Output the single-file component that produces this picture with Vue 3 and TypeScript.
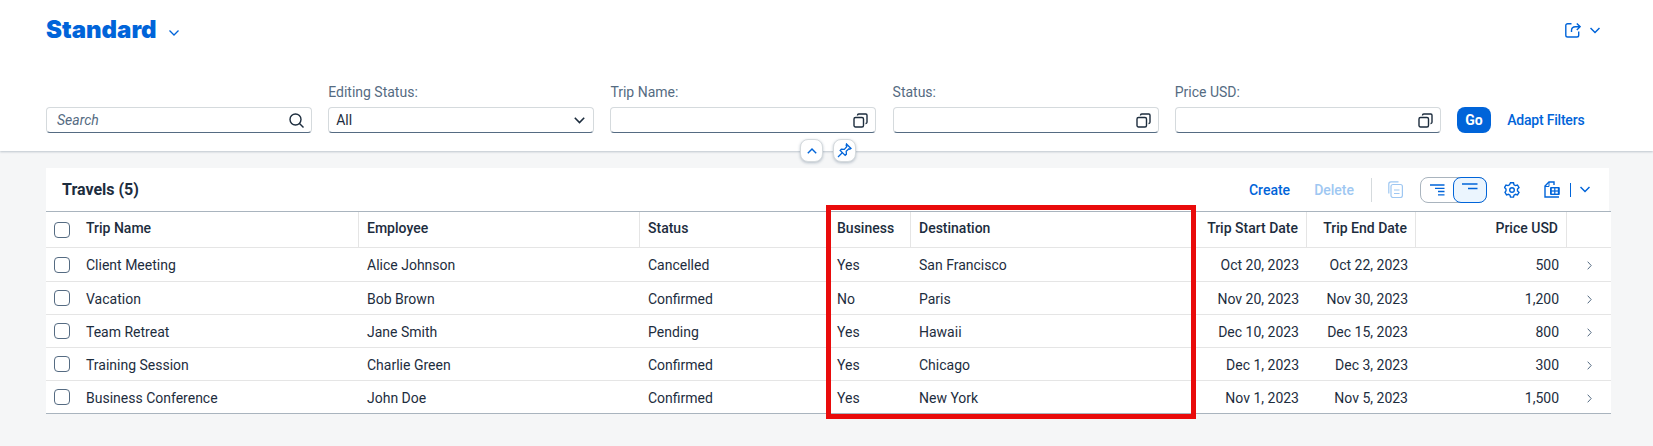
<script setup lang="ts">
interface Row { trip: string; emp: string; status: string; biz: string; dest: string; start: string; end: string; price: string }
const rows: Row[] = [
  { trip: 'Client Meeting', emp: 'Alice Johnson', status: 'Cancelled', biz: 'Yes', dest: 'San Francisco', start: 'Oct 20, 2023', end: 'Oct 22, 2023', price: '500' },
  { trip: 'Vacation', emp: 'Bob Brown', status: 'Confirmed', biz: 'No', dest: 'Paris', start: 'Nov 20, 2023', end: 'Nov 30, 2023', price: '1,200' },
  { trip: 'Team Retreat', emp: 'Jane Smith', status: 'Pending', biz: 'Yes', dest: 'Hawaii', start: 'Dec 10, 2023', end: 'Dec 15, 2023', price: '800' },
  { trip: 'Training Session', emp: 'Charlie Green', status: 'Confirmed', biz: 'Yes', dest: 'Chicago', start: 'Dec 1, 2023', end: 'Dec 3, 2023', price: '300' },
  { trip: 'Business Conference', emp: 'John Doe', status: 'Confirmed', biz: 'Yes', dest: 'New York', start: 'Nov 1, 2023', end: 'Nov 5, 2023', price: '1,500' },
]
const valueHelps = ['Trip Name:', 'Status:', 'Price USD:']
</script>

<template>
  <div class="page">
    <header class="head">
      <div class="title-row">
        <div class="variant">
          <h1>Standard</h1>
          <svg class="chev" width="10" height="6" viewBox="0 0 10 6"><path d="M.5.5 5 5 9.500.5" /></svg>
        </div>
        <div class="share">
          <svg width="16" height="16" viewBox="0 0 16 16" fill="none" stroke="#0064d9" stroke-width="1.400">
            <path d="M6.500 1.800H2.600a1.800 1.800 0 0 0-1.800 1.800v9.600a1.800 1.800 0 0 0 1.800 1.800h9.300a1.800 1.800 0 0 0 1.800-1.800V9.500" />
            <path d="M6.500 10V8.500c0-2.300 1.800-3.800 4-3.800h4.500M11.800 1.400l3.300 3.300-3.300 3.300" />
          </svg>
          <svg class="chev big" width="10" height="7" viewBox="0 0 10 7"><path d="M.5 1 5 5.500 9.500 1" /></svg>
        </div>
      </div>
      <div class="filters">
        <div class="field">
          <span class="label"></span>
          <div class="input"><i class="ph">Search</i>
            <svg width="15" height="15" viewBox="0 0 15 15" fill="none" stroke="#1d2d3e" stroke-width="1.400"><circle cx="6.500" cy="6.500" r="5.500" /><path d="m10.500 10.500 4 4" /></svg>
          </div>
        </div>
        <div class="field">
          <span class="label">Editing Status:</span>
          <div class="input select"><span>All</span>
            <svg width="11" height="7" viewBox="0 0 11 7" fill="none" stroke="#1d2d3e" stroke-width="1.600"><path d="m.8.800 4.700 4.700L10.200.8" /></svg>
          </div>
        </div>
        <div v-for="l in valueHelps" :key="l" class="field">
          <span class="label">{{ l }}</span>
          <div class="input">
            <span></span>
            <svg width="15" height="15" viewBox="0 0 15 15" fill="none" stroke="#1d2d3e" stroke-width="1.400"><rect x="1" y="4.500" width="9.500" height="9.500" rx="1.500" /><path d="M4.500 2.500V2.300A1.300 1.300 0 0 1 5.800 1h7a1.300 1.300 0 0 1 1.200 1.300v7a1.300 1.300 0 0 1-1.200 1.200h-.3" /></svg>
          </div>
        </div>
        <button class="go">Go</button>
        <a class="adapt">Adapt Filters</a>
      </div>
      <div class="collapse">
        <span class="round"><svg width="10" height="6" viewBox="0 0 10 6" fill="none" stroke="#0064d9" stroke-width="1.400"><path d="M.8 5.300 5 1l4.200 4.300" /></svg></span>
        <span class="round"><svg width="15" height="15" viewBox="0 0 15 15" fill="none" stroke="#0064d9" stroke-width="1.300"><path d="M9.500 1 14 5.500l-1.200.8-.9-.5-2.700 2.500.2 3-1.200 1.100L3.200 7.400l1.100-1.200 3 .2L9.800 3.700l-.6-1z" /><path d="M5.500 9.500 1 14" /></svg></span>
      </div>
    </header>

    <section class="card">
      <div class="toolbar">
        <h2>Travels (5)</h2>
        <div class="actions">
          <a class="act">Create</a>
          <a class="act off">Delete</a>
          <span class="sep"></span>
          <svg class="copy" width="15" height="17" viewBox="0 0 15 17" fill="none" stroke="#9ec7f2" stroke-width="1.200"><rect x="3" y="3.500" width="11.400" height="13" rx="2" /><path d="M.8 12.500V3A2.200 2.200 0 0 1 3 .8h7.500M6 9h5.500M6 12.500h5.500" /></svg>
          <div class="seg">
            <span class="seg-btn">
              <svg width="15" height="12" viewBox="0 0 15 12" stroke="#0064d9" stroke-width="1.300"><path d="M0 1h14.500M5 4.300h9.500M8 7.500h6.500M8 10.800h6.500" /></svg>
            </span>
            <span class="seg-btn on">
              <svg width="16" height="7" viewBox="0 0 16 7" stroke="#0064d9" stroke-width="1.300"><path d="M0 1h15.500M6 5.500h9.500" /></svg>
            </span>
          </div>
          <svg class="gear" width="16" height="16" viewBox="0 0 16 16" fill="none" stroke="#0064d9" stroke-width="1.400"><path d="M6.500.8h3l.5 2 1.500.8 2-.6 1.500 2.600-1.500 1.400v1.900l1.500 1.400-1.500 2.600-2-.6-1.500.8-.5 2h-3l-.5-2-1.500-.8-2 .6-1.500-2.600L2 8.900V7L.5 5.600 2 3l2 .6 1.500-.8z" /><circle cx="8" cy="8" r="2.300" /></svg>
          <svg class="sheet" width="16" height="17" viewBox="0 0 16 17" fill="none" stroke="#0064d9" stroke-width="1.400"><path d="M10 4V1H5L1 5v11h14" /><path d="M1 5.500h4V1" stroke-width="1" /><rect x="6" y="6" width="9.800" height="8" rx="1" fill="#0064d9" stroke="none" /><rect x="7.800" y="7.400" width="2.400" height="2" fill="#fff" stroke="none" /><rect x="11.400" y="7.400" width="2.400" height="2" fill="#fff" stroke="none" /><rect x="7.800" y="10.600" width="2.400" height="2" fill="#fff" stroke="none" /><rect x="11.400" y="10.600" width="2.400" height="2" fill="#fff" stroke="none" /></svg>
          <span class="thin"></span>
          <svg class="chev big" width="10" height="7" viewBox="0 0 10 7"><path d="M.5 1 5 5.500 9.500 1" /></svg>
        </div>
      </div>

      <div class="table-wrap">
        <table>
          <colgroup>
            <col class="c1" /><col class="c2" /><col class="c3" /><col class="c4" /><col class="c5" /><col class="c6" /><col class="c7" /><col class="c8" /><col class="c9" /><col class="c10" />
          </colgroup>
          <thead>
            <tr>
              <th class="sel"><span class="box"></span></th>
              <th>Trip Name</th><th>Employee</th><th>Status</th><th>Business</th><th>Destination</th>
              <th class="r">Trip Start Date</th><th class="r">Trip End Date</th><th class="r">Price USD</th><th></th>
            </tr>
          </thead>
          <tbody>
            <tr v-for="r in rows" :key="r.trip">
              <td class="sel"><span class="box"></span></td>
              <td>{{ r.trip }}</td><td>{{ r.emp }}</td><td>{{ r.status }}</td><td>{{ r.biz }}</td><td>{{ r.dest }}</td>
              <td class="r">{{ r.start }}</td><td class="r">{{ r.end }}</td><td class="r">{{ r.price }}</td>
              <td class="nav"><svg width="5" height="9" viewBox="0 0 5 9" fill="none" stroke="#556b82" stroke-width="1"><path d="m.7.700 3.500 3.800L.7 8.300" /></svg></td>
            </tr>
          </tbody>
        </table>
        <div class="mark"></div>
      </div>
    </section>
  </div>
</template>

<style>
html, body { margin: 0; background: #f5f6f7; }
</style>

<style scoped>
.page { width: 1653px; height: 446px; overflow: hidden; background: #f5f6f7; font-family: "Roboto", "Liberation Sans", sans-serif; font-size: 14px; color: #1d2d3e; }
.head { position: relative; height: 151px; box-sizing: border-box; background: #fff; padding: 0 53px 0 46px; box-shadow: 0 1px 2px rgba(85,107,130,.35); }
.title-row { height: 60px; display: flex; align-items: center; justify-content: space-between; }
.variant { display: flex; align-items: center; gap: 12px; }
h1 { margin: 0; font-family: "Inter", sans-serif; font-size: 24px; font-weight: 900; color: #0064d9; line-height: 1; }
.chev { fill: none; stroke: #0064d9; stroke-width: 1.300; }
.chev.big { stroke-width: 1.500; }
.variant .chev { margin-top: 5px; }
.share { display: flex; align-items: center; gap: 9px; }
.filters { display: flex; align-items: flex-end; gap: 16.200px; padding-top: 24px; }
.field { width: 266px; display: flex; flex-direction: column; gap: 6px; }
.label { height: 17px; line-height: 17px; color: #556b82; }
.input { height: 26px; box-sizing: border-box; display: flex; align-items: center; justify-content: space-between; padding: 0 7px 0 10px; background: #fff; border: 1px solid #d5dadd; border-bottom-color: #556b82; border-radius: 4px; }
.select { padding-left: 7px; padding-right: 8px; }
.ph { color: #556b82; }
.go { width: 34px; height: 26px; padding: 0; border: 0; border-radius: 8px; background: #0064d9; color: #fff; font: 700 14px "Roboto", sans-serif; }
.adapt { line-height: 26px; font-weight: 500; letter-spacing: -0.200px; color: #0064d9; }
.collapse { position: absolute; left: 800px; top: 139px; display: flex; gap: 10px; }
.round { width: 23px; height: 23px; box-sizing: border-box; display: flex; align-items: center; justify-content: center; background: #fff; border: 1px solid #d5dadd; border-radius: 8px; box-shadow: 0 1px 3px rgba(85,107,130,.4); }
.card { margin: 17px 0 0 46px; width: 1563px; background: #fff; }
.toolbar { height: 43px; box-sizing: border-box; display: flex; align-items: center; justify-content: space-between; padding: 0 19px 0 16px; }
h2 { margin: 0; font-size: 16px; font-weight: 700; }
.actions { display: flex; align-items: center; }
.act { font-weight: 500; color: #0064d9; margin-right: 24px; }
.act.off { color: #9ec7f2; margin-right: 17px; }
.sep { width: 1px; height: 24px; background: #d5dadd; margin-right: 16px; }
.copy { margin-right: 17px; }
.seg { display: flex; width: 67px; height: 26px; box-sizing: border-box; border: 1px solid #a9b4be; border-radius: 8px; margin-right: 17px; }
.seg-btn { flex: 1; display: flex; align-items: center; justify-content: center; }
.seg-btn.on { margin: -1px -1px -1px 0; align-items: flex-start; padding-top: 5px; background: #ebf5fe; border: 1px solid #0064d9; border-radius: 8px; }
.gear { margin-right: 24px; }
.thin { width: 1px; height: 14px; background: #0064d9; margin: 0 9px 0 10px; }
.table-wrap { position: relative; width: 1565px; }
table { width: 1565px; table-layout: fixed; border-collapse: separate; border-spacing: 0; border-top: 1px solid #a9b4be; border-bottom: 1px solid #a9b4be; background: #fff; }
.c1 { width: 32px; } .c2 { width: 281px; } .c3 { width: 281px; } .c4 { width: 189px; } .c5 { width: 82px; }
.c6 { width: 283px; } .c7 { width: 113px; } .c8 { width: 109px; } .c9 { width: 151px; } .c10 { width: 44px; }
th { height: 36px; padding: 0 8px 3px; box-sizing: border-box; text-align: left; font-weight: 500; border-bottom: 1px solid #e5e5e5; border-right: 1px solid #e5e5e5; white-space: nowrap; }
th.sel, td.sel { padding: 0 0 0 8px; border-right: 0; }
th:last-child { border-right: 0; }
td { height: 33px; padding: 1px 8px 0; box-sizing: border-box; border-bottom: 1px solid #e5e5e5; white-space: nowrap; }
tbody tr:first-child td { height: 34px; }
tbody tr:last-child td { height: 32px; border-bottom: 0; }
.r { text-align: right; }
.nav { text-align: center; }
.box { display: block; width: 16px; height: 16px; box-sizing: border-box; border: 1px solid #556b82; border-radius: 4px; background: #fff; }
.mark { position: absolute; left: 780px; top: -6px; width: 370px; height: 214px; box-sizing: border-box; border: 5px solid #e90b0b; pointer-events: none; }
</style>
